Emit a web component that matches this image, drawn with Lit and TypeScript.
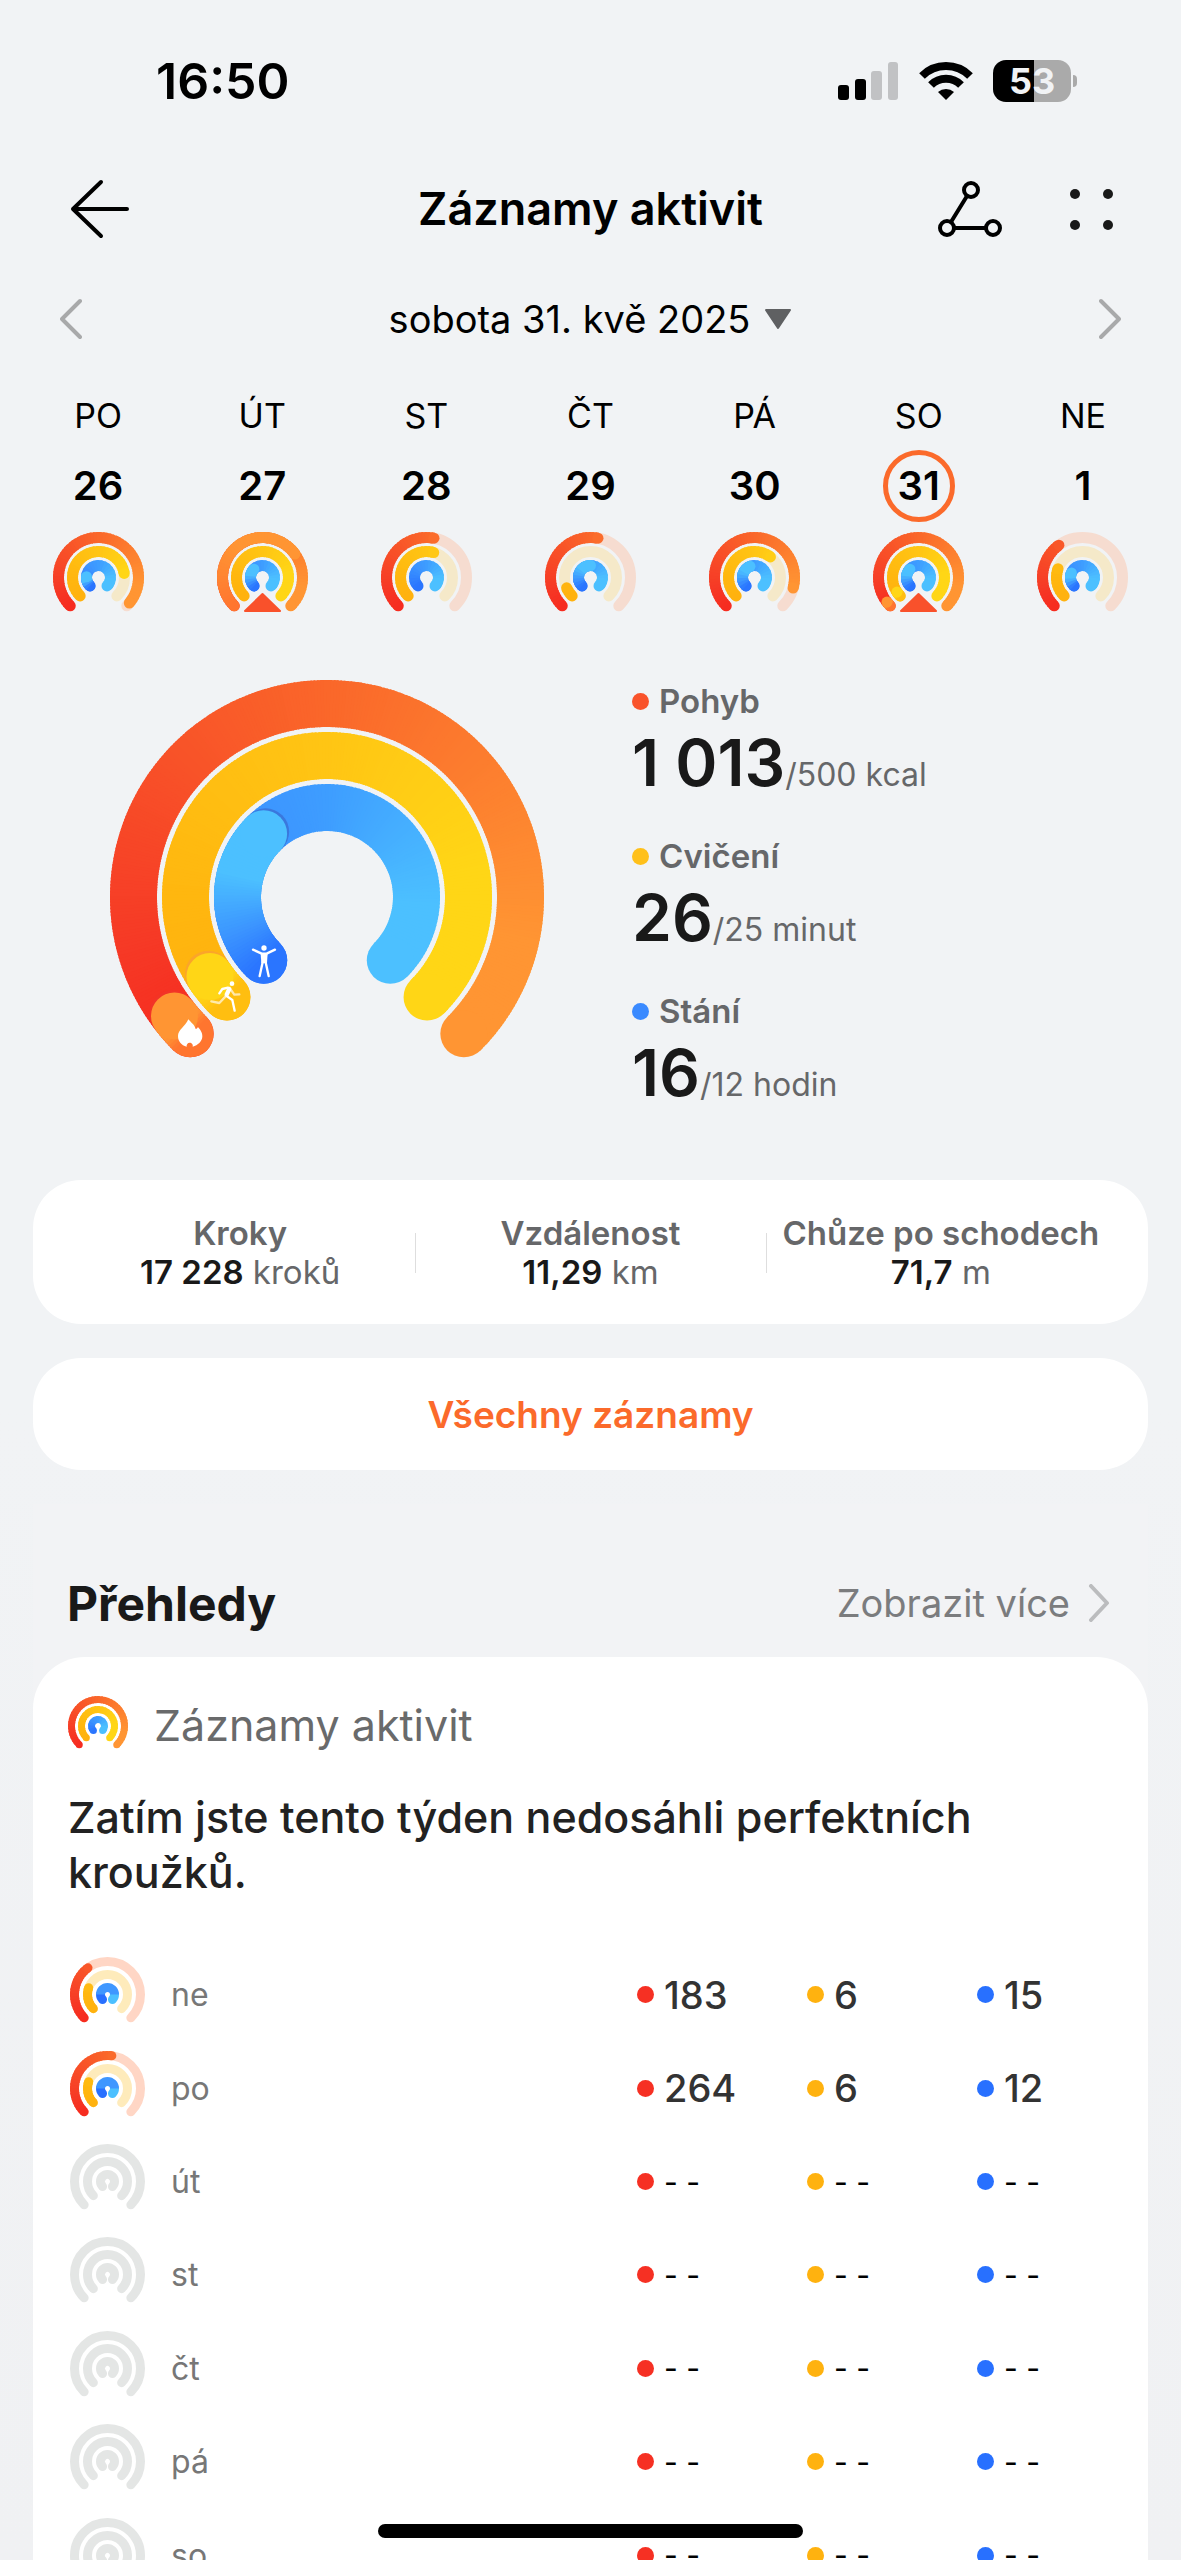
import { LitElement, css, html, svg, nothing } from 'lit'
import { customElement, property } from 'lit/decorators.js'
import { classMap } from 'lit/directives/class-map.js'

type Stop = [number, string]

interface Palette {
  lap: Stop[]
  extra: Stop[]
  shadow: string
}

const MOVE: Palette = {
  lap: [[0, '#f62c20'], [0.12, '#f63a26'], [0.5, '#fa672a'], [0.88, '#ff9533'], [1, '#ff9533']],
  extra: [[0, '#ff752f'], [0.5, '#ff9533'], [1, '#ff9533']],
  shadow: '#f23427',
}
const EXERCISE: Palette = {
  lap: [[0, '#ffb20f'], [0.15, '#ffb60f'], [0.5, '#ffc514'], [0.8, '#ffd616'], [1, '#ffd616']],
  extra: [[0, '#ffbe10'], [0.6, '#ffd316'], [1, '#ffd616']],
  shadow: '#fba52a',
}
const STAND: Palette = {
  lap: [[0, '#2a75ff'], [0.35, '#3c95ff'], [0.5, '#3e9dff'], [0.85, '#4cc0ff'], [1, '#4cc0ff']],
  extra: [[0, '#2a75ff'], [0.25, '#3b93ff'], [0.65, '#4cc0ff'], [1, '#4cc0ff']],
  shadow: '#3a78dd',
}
const PALETTES = [MOVE, EXERCISE, STAND]

// Every ring is open at the bottom: 270 degrees, starting lower left.
const START = 135
const SWEEP = 270

const mix = (stops: Stop[], t: number) => {
  const i = Math.max(1, stops.findIndex(([at]) => at >= t))
  const [a, from] = stops[i - 1]
  const [b, to] = stops[i]
  const k = Math.min(1, Math.max(0, (t - a) / (b - a)))
  const part = (c: string, n: number) => parseInt(c.slice(1 + n * 2, 3 + n * 2), 16)
  return `rgb(${[0, 1, 2].map((n) => Math.round(part(from, n) + (part(to, n) - part(from, n)) * k)).join(' ')})`
}

const point = (r: number, t: number) => {
  const a = ((START + SWEEP * t) * Math.PI) / 180
  return [r * Math.cos(a), r * Math.sin(a)]
}

const arc = (r: number, from: number, to: number) => {
  const [x0, y0] = point(r, from)
  const [x1, y1] = point(r, to)
  return `M${x0} ${y0}A${r} ${r} 0 ${(to - from) * SWEEP > 180 ? 1 : 0} 1 ${x1} ${y1}`
}

@customElement('activity-rings')
export class ActivityRings extends LitElement {
  static override styles = css`
    :host {
      display: block;
    }

    svg {
      display: block;
      width: 100%;
      height: auto;
    }

    path {
      fill: none;
    }

    .track {
      stroke-linecap: round;
    }

    .move {
      stroke: var(--track-move, #f6dcd0);
    }

    .exercise {
      stroke: var(--track-exercise, #f5e9c9);
    }

    .stand {
      stroke: var(--track-stand, #d3e4fa);
    }

    .empty .track {
      stroke: #e4e6e5;
    }

    .goal {
      fill: #f9512b;
      stroke: #f9512b;
      stroke-width: 2;
      stroke-linejoin: round;
    }

    .glyph {
      fill: #fff;
    }

    .limb {
      stroke: #fff;
      stroke-width: 7;
      stroke-linecap: round;
      stroke-linejoin: round;
    }

    .torso {
      stroke-width: 13;
    }

    .far {
      opacity: 0.65;
    }
  `

  @property({ type: Number })
  size = 90

  @property({ type: Number })
  thickness = 11

  @property({ type: Number })
  spacing = 14

  /** Share of each goal; anything above 1 is drawn as a second lap. */
  @property({ attribute: false })
  values: number[] = []

  @property({ type: Boolean })
  goal = false

  @property({ type: Boolean })
  banded = false

  @property({ type: Boolean })
  glyphs = false

  private strip(r: number, end: number, stops: Stop[], scale: number) {
    const length = (end * r * SWEEP * Math.PI) / 180
    const count = Math.max(4, Math.ceil(length / 3))
    const step = end / count
    const [x0, y0] = point(r, 0)
    const [x1, y1] = point(r, end)
    const half = this.thickness / 2
    return svg`
      <circle cx=${x0} cy=${y0} r=${half} fill=${mix(stops, 0)}></circle>
      ${Array.from({ length: count }, (_, i) => svg`
        <path
          d=${arc(r, i * step, Math.min(end, (i + 1.5) * step))}
          stroke=${mix(stops, ((i + 0.5) * step) / scale)}
          stroke-width=${this.thickness}
        ></path>
      `)}
      <circle cx=${x1} cy=${y1} r=${half} fill=${mix(stops, end / scale)}></circle>
    `
  }

  private bands(r: number) {
    const w = this.thickness
    return svg`
      <path class="track" d=${arc(r, 0, 1 / 6)} stroke="#2870ff" stroke-width=${w}></path>
      <path class="track" d=${arc(r, 5 / 6, 1)} stroke="#4cc0ff" stroke-width=${w}></path>
      <path d="${arc(r, 1 / 6, 1 / 2)}${arc(r, 1 / 2, 5 / 6)}" stroke="#3f97ff" stroke-width=${w}></path>
    `
  }

  private ring(index: number) {
    const palette = PALETTES[index]
    const value = this.values[index] ?? 0
    const r = this.size / 2 - this.thickness / 2 - index * this.spacing
    const track = svg`
      <path
        class="track ${['move', 'exercise', 'stand'][index]}"
        d=${arc(r, 0, 1)}
        stroke-width=${this.thickness}
      ></path>
    `
    if (value <= 0) return track
    if (this.banded && index === 2) return this.bands(r)
    if (value < 1) return svg`${track}${this.strip(r, value, palette.lap, 1)}`
    const second = value - Math.floor(value)
    const [sx, sy] = point(r, second + 0.6 / r)
    return svg`
      ${this.strip(r, 1, palette.lap, 1)}
      ${second > 0
        ? svg`
            ${this.glyphs ? svg`<circle cx=${sx} cy=${sy} r=${this.thickness / 2} fill=${palette.shadow}></circle>` : nothing}
            ${this.strip(r, second, palette.extra, second)}
          `
        : nothing}
    `
  }

  private renderGlyphs() {
    return svg`
      <g transform="translate(-157 33) scale(0.3333)">
        <path
          class="glyph"
          d="M55 268C62 277 73 283 77 297C80 297 82 294 84 291C89 298 98 306 97 320C96 334 84 345 68 350C70 343 65 338 59 338C53 338 49 343 50 350C34 346 24 334 24 318C24 299 46 290 55 268Z"
        ></path>
        <circle class="glyph" cx="186" cy="161" r="7"></circle>
        <path class="limb far" d="M184 181L193 194L208 193"></path>
        <path class="limb far" d="M166 200L148 219L124 214"></path>
        <path class="limb" d="M174 173L157 177L148 190"></path>
        <path class="limb torso" d="M178 177L170 194"></path>
        <path class="limb" d="M170 198L187 210L194 242"></path>
        <circle class="glyph" cx="282" cy="54" r="8"></circle>
        <path class="limb" d="M249 59L275 71H290L315 59M279 92L269 138M286 92L296 138"></path>
        <path class="glyph" d="M272 70H293L291 100H274Z"></path>
      </g>
    `
  }

  override render() {
    const s = this.size
    return html`
      <svg
        viewBox="${-s / 2} ${-s / 2} ${s} ${s}"
        class=${classMap({ empty: this.values.length === 0 })}
        aria-hidden="true"
      >
        ${[0, 1, 2].map((i) => this.ring(i))}
        ${this.goal ? svg`<path class="goal" d="M0 16.5L17.5 33.5H-17.5Z"></path>` : nothing}
        ${this.glyphs ? this.renderGlyphs() : nothing}
      </svg>
    `
  }
}

const WEEK = [
  { name: 'PO', date: 26, values: [0.98, 0.8, 1.18] },
  { name: 'ÚT', date: 27, values: [1.7, 1, 1.33], goal: true },
  { name: 'ST', date: 28, values: [0.54, 0.56, 1] },
  { name: 'ČT', date: 29, values: [0.54, 0.08, 1.5] },
  { name: 'PÁ', date: 30, values: [0.89, 0.64, 1.42] },
  { name: 'SO', date: 31, values: [2.026, 1.04, 1.33], goal: true, selected: true },
  { name: 'NE', date: 1, values: [0.366, 0.24, 1.25] },
]

const STATS = [
  { kind: 'move', label: 'Pohyb', value: '1 013', target: '/500 kcal' },
  { kind: 'exercise', label: 'Cvičení', value: '26', target: '/25 minut' },
  { kind: 'stand', label: 'Stání', value: '16', target: '/12 hodin' },
]

const TOTALS = [
  { label: 'Kroky', value: '17 228', unit: 'kroků' },
  { label: 'Vzdálenost', value: '11,29', unit: 'km' },
  { label: 'Chůze po schodech', value: '71,7', unit: 'm' },
]

const HISTORY = [
  { day: 'ne', counts: [183, 6, 15], values: [0.366, 0.24, 1.25] },
  { day: 'po', counts: [264, 6, 12], values: [0.528, 0.24, 1] },
  { day: 'út' },
  { day: 'st' },
  { day: 'čt' },
  { day: 'pá' },
  { day: 'so' },
]

@customElement('app-root')
export class AppRoot extends LitElement {
  static override styles = css`
    :host {
      --text: #191919;
      --muted: #666769;
      --faint: #7b7c7e;
      --accent: #fb6a2b;
      --side: 33px;
      position: relative;
      display: block;
      height: 100vh;
      overflow: hidden;
      background: linear-gradient(#f1f3f5, #f1f3f5 55%, #f0f1f3);
      color: var(--text);
      font-family: Inter, 'Liberation Sans', sans-serif;
      font-size: 32px;
    }

    * {
      box-sizing: border-box;
    }

    button {
      padding: 0;
      border: 0;
      background: none;
      color: inherit;
      font: inherit;
      cursor: pointer;
    }

    svg {
      display: block;
    }

    .line {
      fill: none;
      stroke: #000;
      stroke-width: 4;
      stroke-linecap: round;
      stroke-linejoin: round;
    }

    .chevron {
      stroke: #a8a9aa;
    }

    h1,
    h2,
    h3,
    p,
    dl,
    dd {
      margin: 0;
    }

    .status {
      display: flex;
      align-items: center;
      height: 162px;
      padding: 0 104px 0 156px;
      color: #000;
    }

    .clock {
      margin-right: auto;
      font-size: 50px;
      font-weight: 600;
      line-height: 60px;
    }

    .wifi {
      margin: 0 20px;
    }

    .waves {
      fill: none;
      stroke: #000;
      stroke-width: 8;
    }

    .battery {
      position: relative;
      width: 78px;
      height: 42px;
      margin-right: 6px;
      border-radius: 13px;
      background: linear-gradient(90deg, #000 53%, #aaa 53%);
      color: #f1f3f5;
      font-size: 36px;
      font-weight: 700;
      line-height: 42px;
      text-align: center;
    }

    .battery::after {
      content: '';
      position: absolute;
      right: -6px;
      top: 15px;
      width: 4px;
      height: 12px;
      border-radius: 0 4px 4px 0;
      background: #aaa;
    }

    .nav {
      display: grid;
      grid-template-columns: 1fr auto 1fr;
      align-items: center;
      height: 94px;
      padding: 0 68px;
      color: #000;
    }

    .nav h1 {
      font-size: 45px;
      font-weight: 600;
      line-height: 52px;
    }

    .actions {
      display: flex;
      align-items: center;
      justify-content: flex-end;
      gap: 68px;
    }

    .dates {
      display: flex;
      align-items: center;
      justify-content: space-between;
      height: 126px;
      padding: 0 60px;
    }

    .picker {
      display: flex;
      align-items: center;
      gap: 14px;
      color: #000;
      font-size: 38px;
    }

    .caret {
      fill: #5f6062;
      stroke: #5f6062;
      stroke-width: 2;
      stroke-linejoin: round;
    }

    .week {
      display: grid;
      grid-template-columns: repeat(7, 1fr);
      padding: 0 16px;
      color: #000;
    }

    .day {
      display: flex;
      flex-direction: column;
      align-items: center;
    }

    .weekday {
      font-size: 34px;
      line-height: 68px;
    }

    .date {
      width: 72px;
      height: 72px;
      margin-bottom: 10px;
      border: 5px solid transparent;
      border-radius: 50%;
      font-size: 40px;
      font-weight: 600;
      line-height: 62px;
    }

    .selected .date {
      border-color: var(--accent);
    }

    .day activity-rings {
      width: 91px;
    }

    .hero {
      display: flex;
      align-items: flex-start;
      gap: 88px;
      margin-top: 57px;
      padding: 0 110px;
    }

    .hero activity-rings {
      flex: 0 1 434px;
    }

    .stats {
      display: grid;
      gap: 32px;
      padding-top: 1px;
    }

    .stats dt {
      display: flex;
      align-items: center;
      gap: 10px;
      color: var(--muted);
      font-size: 33px;
      font-weight: 600;
      line-height: 40px;
    }

    .stats dd {
      line-height: 83px;
      font-size: 64px;
      font-weight: 600;
      white-space: nowrap;
    }

    .target {
      color: var(--muted);
      font-size: 32px;
      font-weight: 400;
      line-height: 1;
    }

    .dot {
      flex: none;
      width: 17px;
      height: 17px;
      border-radius: 50%;
    }

    .stats .move {
      background: #f9532b;
    }

    .stats .exercise {
      background: #ffc01a;
    }

    .stats .stand {
      background: #3a8aff;
    }

    .totals {
      display: grid;
      grid-template-columns: repeat(3, 1fr);
      align-items: center;
      height: 144px;
      margin: 66px var(--side) 34px;
      padding: 2px 32px 0;
      border-radius: 48px;
      background: #fff;
      color: var(--muted);
      font-size: 33px;
      line-height: 39px;
      text-align: center;
      white-space: nowrap;
    }

    .total {
      position: relative;
    }

    .total + .total::before {
      content: '';
      position: absolute;
      top: 19px;
      left: 0;
      width: 1px;
      height: 40px;
      background: #dedede;
    }

    .totals dt {
      font-weight: 600;
    }

    .totals strong {
      color: var(--text);
      font-weight: 600;
    }

    .all {
      display: block;
      width: calc(100% - 2 * var(--side));
      height: 112px;
      margin: 0 var(--side) 34px;
      border-radius: 48px;
      background: #fff;
      color: var(--accent);
      font-size: 37px;
      font-weight: 600;
    }

    .overview {
      margin: 0 var(--side);
      background: #f2f3f5;
    }

    .heading {
      display: flex;
      align-items: center;
      justify-content: space-between;
      height: 153px;
      padding: 45px 38px 0 34px;
    }

    .heading h2 {
      font-size: 48px;
      font-weight: 700;
    }

    .more {
      display: flex;
      align-items: center;
      gap: 18px;
      color: var(--faint);
      font-size: 38px;
      text-decoration: none;
    }

    .more .chevron {
      stroke: #bbbcbe;
    }

    .card {
      padding: 39px 35px 60px;
      border-radius: 52px;
      background: #fff;
      --track-move: #ffd6c5;
      --track-exercise: #feebbb;
    }

    .card-title {
      display: flex;
      gap: 26px;
      height: 54px;
      color: #696a6b;
      font-size: 43px;
      line-height: 58px;
    }

    .card-title activity-rings {
      width: 60px;
    }

    .card-title h3 {
      font: inherit;
    }

    .message {
      margin-top: 40px;
      color: #222;
      font-size: 43px;
      font-weight: 500;
      line-height: 55px;
    }

    .history {
      width: 100%;
      height: 654px;
      margin-top: 48px;
      border-collapse: collapse;
      table-layout: fixed;
      text-align: left;
    }

    .history th,
    .history td {
      padding: 0;
      font-weight: 400;
      vertical-align: middle;
    }

    .history th {
      color: #777;
    }

    .history .rings {
      width: 103px;
      padding-left: 2px;
    }

    .history activity-rings {
      width: 75px;
    }

    .col {
      width: 170px;
    }

    .col-last {
      width: 136px;
    }

    .count {
      display: flex;
      align-items: center;
      gap: 10px;
      color: #333;
      font-size: 38px;
      font-weight: 500;
    }

    .none {
      color: #000;
      font-size: 30px;
      font-weight: 400;
    }

    .history .move {
      background: #f63023;
    }

    .history .exercise {
      background: #ffb20f;
    }

    .history .stand {
      background: #2870ff;
    }

    .home {
      position: absolute;
      bottom: 22px;
      left: 32%;
      width: 36%;
      height: 14px;
      border-radius: 7px;
      background: #000;
    }
  `

  private renderStatus() {
    return html`
      <div class="status">
        <span class="clock">16:50</span>
        <svg width="61" height="38" viewBox="0 0 61 38" aria-hidden="true">
          <rect x="0" y="23" width="11" height="15" rx="3" />
          <rect x="17" y="17" width="11" height="21" rx="3" />
          <rect x="33" y="9" width="11" height="29" rx="3" fill="#c1c2c4" />
          <rect x="50" y="0" width="10" height="38" rx="3" fill="#c1c2c4" />
        </svg>
        <svg class="wifi" width="54" height="38" viewBox="0 0 54 38" aria-hidden="true">
          <path class="waves" d="M3 14A34 34 0 0 1 51 14M12 23A21 21 0 0 1 42 23" />
          <path d="M27 38L19 30A12 12 0 0 1 35 30Z" />
        </svg>
        <span class="battery">53</span>
      </div>
    `
  }

  private renderNav() {
    return html`
      <header class="nav">
        <button aria-label="Zpět">
          <svg width="64" height="60" viewBox="0 0 64 60">
            <path class="line" d="M59 30H5M33 3L5 30L33 57" />
          </svg>
        </button>
        <h1>Záznamy aktivit</h1>
        <div class="actions">
          <button aria-label="Trasa">
            <svg class="line" width="64" height="58" viewBox="0 0 64 58">
              <circle cx="33" cy="10" r="7" />
              <circle cx="9" cy="48" r="7" />
              <circle cx="55" cy="48" r="7" />
              <path d="M29 16L13 42M16 48H48" />
            </svg>
          </button>
          <button aria-label="Nabídka">
            <svg width="43" height="43" viewBox="0 0 43 43" fill="#191919">
              <circle cx="5" cy="6" r="5" />
              <circle cx="38" cy="6" r="5" />
              <circle cx="5" cy="37" r="5" />
              <circle cx="38" cy="37" r="5" />
            </svg>
          </button>
        </div>
      </header>
    `
  }

  private renderDates() {
    return html`
      <div class="dates">
        <button aria-label="Předchozí den">
          <svg width="22" height="42" viewBox="0 0 22 42">
            <path class="line chevron" d="M20 3L2 21L20 39" />
          </svg>
        </button>
        <button class="picker">
          sobota 31. kvě 2025
          <svg width="28" height="22" viewBox="0 0 28 22">
            <path class="caret" d="M2 2H26L14 20Z" />
          </svg>
        </button>
        <button aria-label="Další den">
          <svg width="22" height="42" viewBox="0 0 22 42">
            <path class="line chevron" d="M2 3L20 21L2 39" />
          </svg>
        </button>
      </div>
      <div class="week">
        ${WEEK.map(
          (day) => html`
            <button class=${classMap({ day: true, selected: !!day.selected })}>
              <span class="weekday">${day.name}</span>
              <span class="date">${day.date}</span>
              <activity-rings size="91" .values=${day.values} ?goal=${day.goal}></activity-rings>
            </button>
          `,
        )}
      </div>
    `
  }

  private renderHero() {
    return html`
      <section class="hero">
        <activity-rings size="434" thickness="47" spacing="52" .values=${[2.026, 1.04, 1.333]} glyphs></activity-rings>
        <dl class="stats">
          ${STATS.map(
            (stat) => html`
              <div>
                <dt><span class="dot ${stat.kind}"></span>${stat.label}</dt>
                <dd>${stat.value}<span class="target">${stat.target}</span></dd>
              </div>
            `,
          )}
        </dl>
      </section>
      <dl class="totals">
        ${TOTALS.map(
          (total) => html`
            <div class="total">
              <dt>${total.label}</dt>
              <dd><strong>${total.value}</strong> ${total.unit}</dd>
            </div>
          `,
        )}
      </dl>
      <button class="all">Všechny záznamy</button>
    `
  }

  private renderCount(kind: string, count?: number) {
    return html`
      <td>
        <div class="count">
          <span class="dot ${kind}"></span>
          ${count === undefined ? html`<span class="none">- -</span>` : count}
        </div>
      </td>
    `
  }

  private renderOverview() {
    return html`
      <section class="overview">
        <div class="heading">
          <h2>Přehledy</h2>
          <a class="more" href="#prehledy">
            Zobrazit více
            <svg width="22" height="38" viewBox="0 0 22 38">
              <path class="line chevron" d="M3 2L19 19L3 36" />
            </svg>
          </a>
        </div>
        <div class="card">
          <div class="card-title">
            <activity-rings size="60" thickness="7" spacing="10" .values=${[1, 1, 1]}></activity-rings>
            <h3>Záznamy aktivit</h3>
          </div>
          <p class="message">Zatím jste tento týden nedosáhli perfektních kroužků.</p>
          <table class="history">
            <colgroup>
              <col class="rings" />
              <col />
              <col class="col" />
              <col class="col" />
              <col class="col-last" />
            </colgroup>
            <tbody>
              ${HISTORY.map(
                (row) => html`
                  <tr>
                    <td class="rings">
                      <activity-rings size="75" thickness="9" spacing="13" .values=${row.values ?? []} banded></activity-rings>
                    </td>
                    <th scope="row">${row.day}</th>
                    ${['move', 'exercise', 'stand'].map((kind, i) => this.renderCount(kind, row.counts?.[i]))}
                  </tr>
                `,
              )}
            </tbody>
          </table>
        </div>
      </section>
    `
  }

  override render() {
    return html`
      ${this.renderStatus()} ${this.renderNav()} ${this.renderDates()} ${this.renderHero()}
      ${this.renderOverview()}
      <div class="home"></div>
    `
  }
}

declare global {
  interface HTMLElementTagNameMap {
    'activity-rings': ActivityRings
    'app-root': AppRoot
  }
}
